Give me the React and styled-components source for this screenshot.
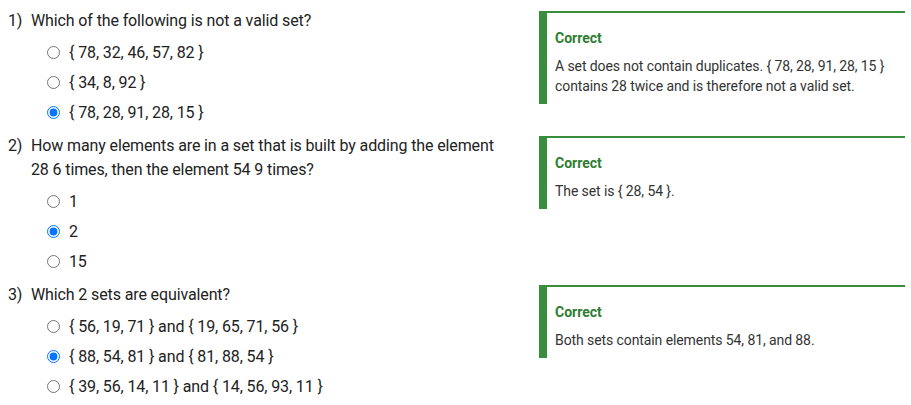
import React from "react";
import styled, { createGlobalStyle } from "styled-components";

const GlobalStyle = createGlobalStyle`
  html, body { margin: 0; padding: 0; background: #fff; }
  body { font-family: Roboto, "Noto Sans", Arial, sans-serif; color: #212121; }
`;

const Page = styled.div`
  padding: 9px 6px 0 8px;
`;

const QuestionRow = styled.section`
  display: grid;
  grid-template-columns: 500px 1fr;
  column-gap: 31px;
  align-items: start;
  margin-bottom: 7px;
`;

const Question = styled.div`
  display: flex;
  font-size: 16px;
  line-height: 24px;
  letter-spacing: -0.12px;
  color: #222;
`;

const Number = styled.span`
  flex: 0 0 23px;
`;

const Prompt = styled.span`
  flex: 1;
`;

const Options = styled.div`
  display: flex;
  flex-direction: column;
  margin-top: 4px;
  padding-left: 39px;
`;

const Option = styled.label`
  display: flex;
  align-items: center;
  height: 30px;
  font-size: 16px;
  letter-spacing: -0.12px;
  color: #222;
`;

const Radio = styled.input`
  width: 13px;
  height: 13px;
  margin: 0 9px 0 0;
`;

const Feedback = styled.div`
  margin-top: 2px;
  border-top: 2px solid #388e3c;
  border-left: 8px solid #388e3c;
  padding: 15px 8px 8px 8px;
`;

const FeedbackTitle = styled.div`
  font-size: 14px;
  line-height: 20px;
  font-weight: 700;
  color: #2e7d32;
  margin-bottom: 8px;
`;

const FeedbackBody = styled.div`
  font-size: 14px;
  line-height: 20px;
  letter-spacing: -0.09px;
  color: #333;
`;

const questions = [
  {
    n: "1)",
    prompt: "Which of the following is not a valid set?",
    options: ["{ 78, 32, 46, 57, 82 }", "{ 34, 8, 92 }", "{ 78, 28, 91, 28, 15 }"],
    selected: 2,
    feedback:
      "A set does not contain duplicates. { 78, 28, 91, 28, 15 } contains 28 twice and is therefore not a valid set.",
  },
  {
    n: "2)",
    prompt:
      "How many elements are in a set that is built by adding the element 28 6 times, then the element 54 9 times?",
    options: ["1", "2", "15"],
    selected: 1,
    feedback: "The set is { 28, 54 }.",
  },
  {
    n: "3)",
    prompt: "Which 2 sets are equivalent?",
    options: [
      "{ 56, 19, 71 } and { 19, 65, 71, 56 }",
      "{ 88, 54, 81 } and { 81, 88, 54 }",
      "{ 39, 56, 14, 11 } and { 14, 56, 93, 11 }",
    ],
    selected: 1,
    feedback: "Both sets contain elements 54, 81, and 88.",
  },
];

export default function App() {
  return (
    <>
      <GlobalStyle />
      <Page>
        {questions.map((q, qi) => (
          <QuestionRow key={qi}>
            <div>
              <Question>
                <Number>{q.n}</Number>
                <Prompt>{q.prompt}</Prompt>
              </Question>
              <Options>
                {q.options.map((o, oi) => (
                  <Option key={oi}>
                    <Radio
                      type="radio"
                      name={`q${qi}`}
                      defaultChecked={oi === q.selected}
                    />
                    {o}
                  </Option>
                ))}
              </Options>
            </div>
            <Feedback>
              <FeedbackTitle>Correct</FeedbackTitle>
              <FeedbackBody>{q.feedback}</FeedbackBody>
            </Feedback>
          </QuestionRow>
        ))}
      </Page>
    </>
  );
}
